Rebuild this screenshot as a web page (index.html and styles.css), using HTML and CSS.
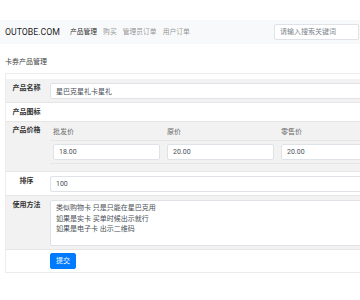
FILE: index.html
```html
<!DOCTYPE html>
<html lang="zh-CN">
<head>
<meta charset="utf-8">
<title>卡券产品管理</title>
<link rel="stylesheet" href="styles.css">
</head>
<body>
<nav class="navbar">
  <span class="brand">OUTOBE.COM</span>
  <ul class="nav">
    <li class="active">产品管理</li>
    <li>购买</li>
    <li>管理员订单</li>
    <li>用户订单</li>
  </ul>
  <input class="search" type="text" placeholder="请输入搜索关键词">
</nav>
<main class="page">
  <div class="title">卡券产品管理</div>
  <div class="card">
    <table class="form">
      <colgroup><col class="c-label"><col class="c-value"></colgroup>
      <tr class="odd">
        <th>产品名称</th>
        <td><input class="field" type="text" value="星巴克星礼卡星礼"></td>
      </tr>
      <tr>
        <th>产品图标</th>
        <td></td>
      </tr>
      <tr class="odd">
        <th>产品价格</th>
        <td>
          <table class="prices">
            <tr class="head"><th>批发价</th><th>原价</th><th>零售价</th></tr>
            <tr>
              <td><input class="field" type="text" value="18.00"></td>
              <td><input class="field" type="text" value="20.00"></td>
              <td><input class="field" type="text" value="20.00"></td>
            </tr>
          </table>
        </td>
      </tr>
      <tr>
        <th>排序</th>
        <td><input class="field" type="text" value="100"></td>
      </tr>
      <tr class="odd">
        <th>使用方法</th>
        <td><textarea class="field area">类似购物卡 只是只能在星巴克用
如果是实卡 买单时候出示就行
如果是电子卡 出示二维码</textarea></td>
      </tr>
      <tr class="last">
        <th></th>
        <td><button class="btn" type="button">提交</button></td>
      </tr>
    </table>
  </div>
</main>
</body>
</html>
```
FILE: styles.css
```css
* { box-sizing: border-box; }
html, body { margin: 0; padding: 0; }
body {
  width: 360px;
  height: 300px;
  overflow: hidden;
  background: #fff;
  color: #212529;
  font-family: Roboto, "Noto Sans CJK SC", sans-serif;
  font-size: 7px;
  line-height: 10.5px;
}

/* navbar */
.navbar {
  margin-top: 20px;
  height: 24px;
  background: #f8f9fa;
  display: flex;
  align-items: center;
  padding: 0 1px 0 5px;
}
.brand {
  font-size: 8.75px;
  color: rgba(0, 0, 0, .9);
  margin-right: 7px;
}
.nav {
  display: flex;
  list-style: none;
  margin: 0;
  padding: 0;
}
.nav li {
  padding: 0 3px;
  font-size: 6.8px;
  color: rgba(0, 0, 0, .45);
}
.nav li.active { color: rgba(0, 0, 0, .85); }
.search {
  margin-left: auto;
  width: 85px;
  height: 16px;
  border: 1px solid #dfe3e7;
  border-radius: 2px;
  padding: 0 5px;
  font: inherit;
  color: #495057;
  background: #fff;
}
.search::placeholder { color: #7d858c; }

/* page */
.page { padding-left: 5px; }
.title {
  padding-top: 13px;
  color: #444;
}
.card {
  margin-top: 5.5px;
  width: 355px;
  overflow: hidden;
  padding-top: 5px;
  border: 1px solid #ececec;
  border-right: none;
}
.form {
  width: 415px;
  border-collapse: collapse;
  table-layout: fixed;
}
.c-label { width: 41px; }
.form > tbody > tr + tr > th,
.form > tbody > tr + tr > td { border-top: 1px solid #e6e6e6; }
.form > tbody > tr.odd { background: #f2f2f2; }
.form > tbody > tr > th {
  padding: 3.5px 0;
  text-align: center;
  vertical-align: top;
  font-weight: bold;
  color: #333;
}
.form > tbody > tr > td {
  padding: 3.5px 3.5px 3.5px 3px;
  vertical-align: top;
}
.form > tbody > tr.last > td { padding-top: 3px; padding-bottom: 2.5px; }

.field {
  display: block;
  width: 100%;
  height: 16px;
  margin: 0;
  padding: 0 5px;
  border: 1px solid #dfe3e7;
  border-radius: 2px;
  background: #fff;
  font: inherit;
  color: #495057;
}
.area {
  height: 46px;
  padding: 2.6px 5px;
  line-height: 10.5px;
  resize: none;
}

.prices {
  width: 342px;
  border-collapse: collapse;
  table-layout: fixed;
  margin-bottom: 4px;
}
.prices th {
  padding: 1.5px 4px 3px 3px;
  text-align: left;
  font-weight: normal;
  color: #6a6a6a;
  border-bottom: 1px solid #e6e6e6;
}
.prices td {
  padding: 3px 4px 2.5px 3px;
  border-bottom: 1px solid #e6e6e6;
}

.btn {
  display: block;
  height: 16px;
  padding: 0 5px;
  border: 1px solid #007bff;
  border-radius: 2px;
  background: #007bff;
  color: #fff;
  font: inherit;
  cursor: pointer;
}
```
